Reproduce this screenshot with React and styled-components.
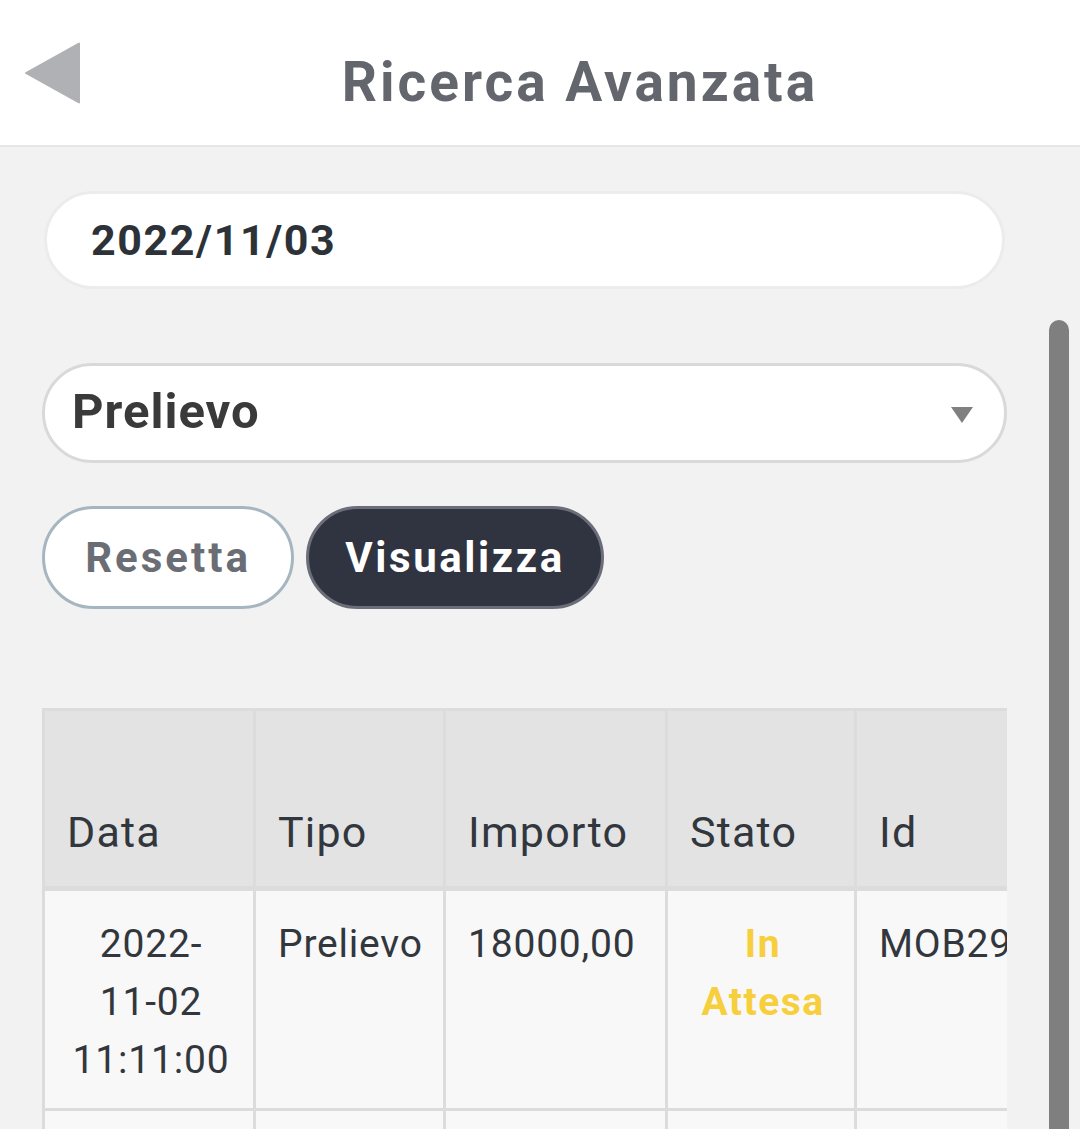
import React from "react";
import styled, { createGlobalStyle } from "styled-components";

const GlobalStyle = createGlobalStyle`
    body {
        margin: 0;
        background: #f2f2f2;
        font-family: Roboto, "Liberation Sans", sans-serif;
    }
`;

const Page = styled.div`
    position: relative;
    min-height: 1129px;
    overflow: hidden;
    background: #f2f2f2;
`;

const Header = styled.header`
    display: flex;
    align-items: center;
    height: 145px;
    background: #ffffff;
    border-bottom: 2px solid #e6e6e6;
`;

const BackButton = styled.button`
    display: flex;
    align-items: center;
    width: 80px;
    height: 100%;
    padding: 0 0 0 25px;
    border: none;
    background: none;
    cursor: pointer;
`;

const Title = styled.h1`
    flex: 1;
    margin: 0;
    padding-top: 18px;
    text-align: center;
    font-size: 55px;
    font-weight: 700;
    color: #63666d;
    letter-spacing: 3px;
`;

const Content = styled.main`
    padding: 44px 73px 0 42px;
`;

const DateField = styled.div`
    display: flex;
    align-items: center;
    height: 92px;
    margin: 0 2px;
    padding-left: 44px;
    background: #ffffff;
    border: 3px solid #ececec;
    border-radius: 50px;
    font-size: 43px;
    font-weight: 700;
    color: #2c3238;
    letter-spacing: 1.6px;
`;

const Select = styled.div`
    display: flex;
    align-items: center;
    justify-content: space-between;
    height: 90px;
    margin-top: 74px;
    padding: 0 31px 4px 27px;
    background: #ffffff;
    border: 3px solid #d9d9d9;
    border-radius: 50px;
    font-size: 49px;
    font-weight: 700;
    color: #3a3a3a;
    letter-spacing: 1px;

    svg {
        margin-top: 8px;
    }
`;

const ButtonRow = styled.div`
    display: flex;
    gap: 12px;
    margin-top: 43px;
`;

const Pill = styled.button`
    height: 103px;
    width: ${(p) => p.$width}px;
    padding: 0;
    border-radius: 52px;
    border: 3px solid ${(p) => (p.$dark ? "#6b6e78" : "#a6b6c1")};
    background: ${(p) => (p.$dark ? "#303440" : "#ffffff")};
    color: ${(p) => (p.$dark ? "#ffffff" : "#6b6d75")};
    font-family: Roboto, "Liberation Sans", sans-serif;
    font-size: 42px;
    font-weight: 700;
    letter-spacing: ${(p) => (p.$dark ? 2.6 : 3)}px;
    cursor: pointer;
`;

const TableWrap = styled.div`
    width: 965px;
    margin-top: 99px;
    overflow: hidden;
`;

const Table = styled.table`
    table-layout: fixed;
    width: 1112px;
    border-collapse: collapse;
    border: 3px solid #dcdcdc;
`;

const Th = styled.th`
    height: 146px;
    padding: 0 20px 29px 22px;
    background: #e3e3e3;
    border: 3px solid #dcdcdc;
    border-bottom-width: 5px;
    vertical-align: bottom;
    text-align: left;
    font-size: 43px;
    font-weight: 400;
    color: #32373d;
    letter-spacing: 1.2px;
`;

const Td = styled.td`
    padding: 24px 18px 19px 22px;
    background: #f8f8f8;
    border: 3px solid #dcdcdc;
    vertical-align: top;
    text-align: ${(p) => (p.$center ? "center" : "left")};
    font-size: 39px;
    line-height: 58px;
    letter-spacing: ${(p) => (p.$status ? 1.5 : 0.8)}px;
    font-weight: ${(p) => (p.$status ? 700 : 400)};
    color: ${(p) => (p.$status ? "#f7cf3d" : "#32373d")};
    white-space: ${(p) => (p.$nowrap ? "nowrap" : "normal")};
    overflow: hidden;
`;

const Keep = styled.span`
    white-space: nowrap;
`;

const Scrollbar = styled.div`
    position: absolute;
    left: 1049px;
    top: 320px;
    bottom: 0;
    width: 20px;
    background: #7f7f7f;
    border-radius: 10px 10px 0 0;
`;

const columns = [
    { label: "Data", width: 211 },
    { label: "Tipo", width: 190 },
    { label: "Importo", width: 222 },
    { label: "Stato", width: 189 },
    { label: "Id", width: 300 },
];

const rows = [
    { date: "2022-11-02 11:11:00", type: "Prelievo", amount: "18000,00", status: "In Attesa", id: "MOB2911220001" },
    { date: "2022-11-01 09:30:00", type: "Prelievo", amount: "500,00", status: "In Attesa", id: "MOB2911220002" },
];

// year on its own line, then month-day, then time
const DateCell = ({ value }) => {
    const [day, time] = value.split(" ");
    const cut = day.indexOf("-") + 1;
    return (
        <>
            {day.slice(0, cut)} <Keep>{day.slice(cut)}</Keep> {time}
        </>
    );
};

const App = () => {
    return (
        <Page>
            <GlobalStyle />
            <Header>
                <BackButton aria-label="Indietro">
                    <svg width="56" height="62" viewBox="0 0 56 62">
                        <polygon points="55,1 55,61 1,31" fill="#b0b1b5" stroke="#b0b1b5" strokeWidth="2" strokeLinejoin="round" />
                    </svg>
                </BackButton>
                <Title>Ricerca Avanzata</Title>
            </Header>

            <Content>
                <DateField>2022/11/03</DateField>

                <Select>
                    Prelievo
                    <svg width="22" height="16" viewBox="0 0 22 16">
                        <polygon points="0,0 22,0 11,16" fill="#808080" />
                    </svg>
                </Select>

                <ButtonRow>
                    <Pill $width={252}>Resetta</Pill>
                    <Pill $width={298} $dark>Visualizza</Pill>
                </ButtonRow>

                <TableWrap>
                    <Table>
                        <colgroup>
                            {columns.map((c) => (
                                <col key={c.label} style={{ width: c.width }} />
                            ))}
                        </colgroup>
                        <thead>
                            <tr>
                                {columns.map((c) => (
                                    <Th key={c.label}>{c.label}</Th>
                                ))}
                            </tr>
                        </thead>
                        <tbody>
                            {rows.map((r) => (
                                <tr key={r.id}>
                                    <Td $center><DateCell value={r.date} /></Td>
                                    <Td>{r.type}</Td>
                                    <Td>{r.amount}</Td>
                                    <Td $center $status>{r.status}</Td>
                                    <Td $nowrap>{r.id}</Td>
                                </tr>
                            ))}
                        </tbody>
                    </Table>
                </TableWrap>
            </Content>

            <Scrollbar />
        </Page>
    );
};

export default App;
